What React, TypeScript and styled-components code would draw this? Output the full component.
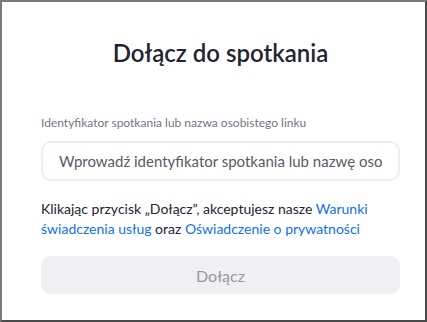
import React from "react";
import styled, { createGlobalStyle } from "styled-components";

const GlobalStyle = createGlobalStyle`
  html, body {
    margin: 0;
    padding: 0;
    background: #ffffff;
  }
  body {
    font-family: Lato, "Noto Sans", sans-serif;
  }
`;

export default function App() {
  return (
    <>
      <GlobalStyle />
      <Window>
        <Title>Dołącz do spotkania</Title>
        <Label htmlFor="meeting-id">
          Identyfikator spotkania lub nazwa osobistego linku
        </Label>
        <Input
          id="meeting-id"
          placeholder="Wprowadź identyfikator spotkania lub nazwę osobistego linku"
        />
        <Terms>
          Klikając przycisk „Dołącz”, akceptujesz nasze{" "}
          <Link href="#">Warunki świadczenia usług</Link> oraz{" "}
          <Link href="#">Oświadczenie o prywatności</Link>
        </Terms>
        <JoinButton disabled>Dołącz</JoinButton>
      </Window>
    </>
  );
}

const Window = styled.div`
  box-sizing: border-box;
  width: 427px;
  height: 322px;
  display: flex;
  flex-direction: column;
  padding: 0 25px 0 39px;
  border-style: solid;
  border-width: 2px;
  border-color: #7a7a7a #4a4a4a #4a4a4a #7a7a7a;
  background: #ffffff;
`;

const Title = styled.h1`
  margin: 33px 0 0;
  font-size: 24px;
  line-height: 36px;
  font-weight: 600;
  color: #232333;
  text-align: center;
`;

const Label = styled.label`
  margin-top: 44px;
  font-size: 12px;
  line-height: 16px;
  color: #747487;
`;

const Input = styled.input`
  box-sizing: border-box;
  margin-top: 10px;
  width: 100%;
  height: 40px;
  padding: 0 16px;
  border: 2px solid #ededf4;
  border-radius: 10px;
  font-family: Lato, "Noto Sans", sans-serif;
  font-size: 15px;
  color: #232333;
  outline: none;

  &::placeholder {
    color: #5a5a66;
    opacity: 1;
  }
`;

const Terms = styled.p`
  margin: 18px 0 0;
  font-size: 14px;
  line-height: 20px;
  color: #232333;
`;

const Link = styled.a`
  color: #0e72ed;
  text-decoration: none;
`;

const JoinButton = styled.button`
  margin-top: 17px;
  width: 100%;
  height: 38px;
  border: none;
  border-radius: 10px;
  background: #efeff4;
  font-family: Lato, "Noto Sans", sans-serif;
  font-size: 16px;
  color: #98989f;
  cursor: default;
`;
